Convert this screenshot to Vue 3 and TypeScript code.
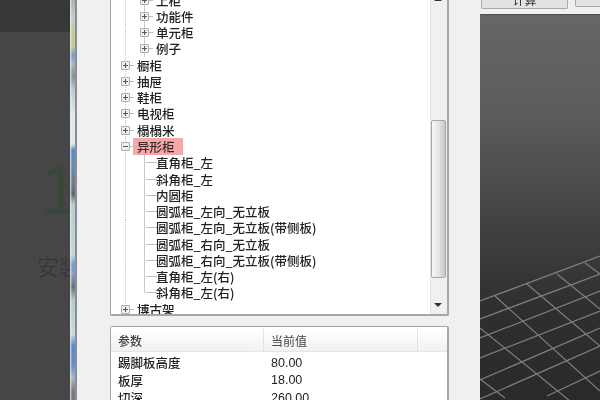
<script setup lang="ts">
interface TreeRow {
  label: string;
  level: number;
  box?: "plus" | "minus";
  last?: boolean;
  active?: boolean;
}

const rows: TreeRow[] = [
  { label: "上柜", level: 1, box: "plus" },
  { label: "功能件", level: 1, box: "plus" },
  { label: "单元柜", level: 1, box: "plus" },
  { label: "例子", level: 1, box: "plus" },
  { label: "橱柜", level: 0, box: "plus" },
  { label: "抽屉", level: 0, box: "plus" },
  { label: "鞋柜", level: 0, box: "plus" },
  { label: "电视柜", level: 0, box: "plus" },
  { label: "榻榻米", level: 0, box: "plus" },
  { label: "异形柜", level: 0, box: "minus", active: true },
  { label: "直角柜_左", level: 1 },
  { label: "斜角柜_左", level: 1 },
  { label: "内圆柜", level: 1 },
  { label: "圆弧柜_左向_无立板", level: 1 },
  { label: "圆弧柜_左向_无立板(带侧板)", level: 1 },
  { label: "圆弧柜_右向_无立板", level: 1 },
  { label: "圆弧柜_右向_无立板(带侧板)", level: 1 },
  { label: "直角柜_左(右)", level: 1 },
  { label: "斜角柜_左(右)", level: 1, last: true },
  { label: "博古架", level: 0, box: "plus" },
];

const params = [
  { name: "踢脚板高度", value: "80.00" },
  { name: "板厚", value: "18.00" },
  { name: "切深", value: "260.00" },
];

// floor grid in preview coordinates (preview starts at 480,14)
const gridLines = [
  [0, 286, 120, 241],
  [0, 304, 120, 259],
  [0, 323, 120, 276],
  [0, 343, 120, 296],
  [0, 365, 120, 313],
  [0, 384, 120, 331],
  [67, 381, 120, 356],
  [15, 281, 120, 376],
  [47, 269, 120, 331],
  [77, 259, 120, 294],
  [105, 248, 120, 259],
  [0, 313, 90, 386],
  [0, 364, 25, 383],
];
</script>

<template>
  <div class="screen">
    <section class="backdrop">
      <div class="backdrop-head"></div>
      <div class="step-no">1</div>
      <div class="step-rule"></div>
      <div class="step-text">安装</div>
    </section>
    <div class="frame-edge"></div>

    <main class="dialog">
      <div class="left-col">
        <div class="tree-box">
          <div class="tree">
            <div
              v-for="row in rows"
              :key="row.label"
              class="row"
              :class="[`level-${row.level}`, { leaf: !row.box, last: row.last }]"
            >
              <span v-if="row.box" class="box">
                <i class="h"></i>
                <i v-if="row.box === 'plus'" class="v"></i>
              </span>
              <span v-else class="stub"></span>
              <span class="label" :class="{ active: row.active }">{{ row.label }}</span>
            </div>
          </div>
          <div class="scrollbar">
            <span class="arrow up"></span>
            <span class="thumb"></span>
            <span class="arrow down"></span>
          </div>
        </div>

        <div class="table-box">
          <div class="t-head">
            <span class="c-name">参数</span>
            <span class="c-value">当前值</span>
            <span class="c-rest"></span>
          </div>
          <div v-for="p in params" :key="p.name" class="t-row">
            <span class="c-name">{{ p.name }}</span>
            <span class="c-value">{{ p.value }}</span>
          </div>
        </div>
      </div>

      <div class="right-col">
        <div class="buttons">
          <button class="btn wide">计算</button>
          <button class="btn"></button>
        </div>
        <div class="preview">
          <svg width="120" height="386" viewBox="0 0 120 386">
            <line
              v-for="(l, i) in gridLines"
              :key="i"
              :x1="l[0]"
              :y1="l[1]"
              :x2="l[2]"
              :y2="l[3]"
              stroke="#7f7f7f"
              stroke-width="1.2"
            />
          </svg>
        </div>
      </div>
    </main>
  </div>
</template>

<style>
html,
body {
  margin: 0;
  background: #f0f0f0;
}
</style>

<style scoped>
.screen {
  width: 600px;
  height: 400px;
  overflow: hidden;
  display: flex;
  background: #f0f0f0;
  font-family: "Noto Sans CJK SC", "Liberation Sans", sans-serif;
  filter: blur(0.55px);
}

.backdrop {
  width: 70px;
  flex: none;
  background: #464646;
  color: #333;
  overflow: hidden;
  display: flex;
  flex-direction: column;
}

.backdrop-head {
  height: 32px;
  flex: none;
  background: #373737;
}

.step-no {
  margin: 118px 0 0 40px;
  height: 80px;
  font: 70px/80px "Liberation Sans", sans-serif;
  color: #39463c;
}

.step-rule {
  height: 1px;
  background: #4b4b4b;
}

.step-text {
  margin: 20px 0 0 37px;
  font-size: 22px;
  font-weight: 300;
  line-height: 28px;
  white-space: nowrap;
  color: #333;
}

.frame-edge {
  width: 7px;
  flex: none;
  background:
    linear-gradient(90deg, rgba(235, 240, 240, 0.8) 0, rgba(235, 240, 240, 0.5) 1px, transparent 2px, transparent 5px, #8a8e92 5.5px),
    linear-gradient(
      180deg,
      #aab4b4 0,
      #c6cdd0 20px,
      #c2cc98 30px,
      #c2cc98 46px,
      #7d9cc4 55px,
      #a9b6c2 64px,
      #8a9096 76px,
      #bfcad4 90px,
      #dfe8ee 115px,
      #dfe8ee 144px,
      #5f86bc 150px,
      #6d8cb4 165px,
      #707880 186px,
      #5f666c 194px,
      #b5cdd0 204px,
      #c4d6d8 255px,
      #7a9ac8 264px,
      #8aa0c0 274px,
      #6a7078 287px,
      #b5cccf 300px,
      #c8dadb 334px,
      #5d86cc 346px,
      #6a8cc4 365px,
      #a8b6c4 378px,
      #77797c 392px,
      #77797c 400px
    );
}

.dialog {
  flex: 1;
  display: flex;
  padding-left: 33px;
  min-width: 0;
}

.left-col {
  width: 339px;
  flex: none;
  display: flex;
  flex-direction: column;
  gap: 10px;
}

.tree-box {
  height: 316px;
  flex: none;
  box-sizing: border-box;
  display: flex;
  background: #fff;
  border: 1px solid #a6a6a6;
  border-top: 0;
  border-right-width: 2px;
  border-bottom-width: 2px;
  border-radius: 0 0 2px 2px;
  overflow: hidden;
}

.tree {
  flex: 1;
  min-width: 0;
  margin-top: -8px;
  color: #222;
  font-size: 12.5px;
  font-weight: 500;
}

.row {
  height: 16.28px;
  display: flex;
  align-items: center;
  position: relative;
  white-space: nowrap;
  /* dotted root guide, x = 125 */
  background: repeating-linear-gradient(180deg, #c4c4c4 0 1px, transparent 1px 2px) 14px 0 / 1px 100% no-repeat;
}

.row.level-0 {
  padding-left: 10px;
}

.row.level-1 {
  padding-left: 29px;
}

.row.level-1::before {
  content: "";
  position: absolute;
  left: 33px;
  top: 0;
  bottom: 0;
  width: 1px;
  background: #c9c9c9;
}

.row.last::before {
  bottom: 50%;
}

.box {
  width: 9px;
  height: 9px;
  flex: none;
  box-sizing: border-box;
  position: relative;
  z-index: 1;
  border: 1px solid #aab0b6;
  border-radius: 1px;
  background: #eef1f4;
  margin-right: 7px;
}

.box::after {
  content: "";
  position: absolute;
  left: 8px;
  top: 3px;
  width: 4px;
  height: 1px;
  background: #bdbdbd;
}

.box .h {
  position: absolute;
  left: 1px;
  top: 3px;
  width: 5px;
  height: 1px;
  background: #555;
}

.box .v {
  position: absolute;
  left: 3px;
  top: 1px;
  width: 1px;
  height: 5px;
  background: #555;
}

.stub {
  width: 12px;
  flex: none;
  height: 1px;
  margin-left: 5px;
  margin-right: -1px;
  background: linear-gradient(90deg, transparent 0 1px, #bdbdbd 1px);
}

.label {
  line-height: 15px;
  position: relative;
}

.label.active {
  background: #f4a8a8;
  padding: 1px 8px 1px 4px;
  margin-left: -4px;
  color: #3b2a2a;
  z-index: 1;
}

.scrollbar {
  width: 16px;
  flex: none;
  position: relative;
  background: #f0f0f0;
  border-left: 1px solid #e4e4e4;
}

.thumb {
  position: absolute;
  left: 0;
  top: 120px;
  width: 15px;
  height: 158px;
  box-sizing: border-box;
  border: 1px solid #a8a8a8;
  border-radius: 2px;
  background: linear-gradient(90deg, #f6f6f6, #e6e6e6 50%, #c6c6cc);
}

.arrow {
  position: absolute;
  left: 3px;
  width: 0;
  height: 0;
  border-left: 4px solid transparent;
  border-right: 4px solid transparent;
}

.arrow.up {
  top: -3px;
  border-bottom: 4px solid #333;
}

.arrow.down {
  top: 303px;
  border-top: 4px solid #333;
}

.table-box {
  flex: 1;
  box-sizing: border-box;
  background: #fff;
  border: 1px solid #a6a6a6;
  border-right-width: 2px;
  border-bottom: 0;
  border-radius: 2px 2px 0 0;
  padding-top: 2px;
  color: #222;
  font-size: 12.5px;
  font-weight: 500;
}

.t-head {
  height: 22px;
  display: flex;
  align-items: center;
  background: linear-gradient(180deg, #fff, #f7f7f7 60%, #f1f1f1);
  border-bottom: 1px solid #e6e6e6;
  color: #444;
}

.t-row {
  height: 17.5px;
  display: flex;
  align-items: center;
}

.t-head + .t-row {
  margin-top: 2px;
}

.c-name {
  width: 153px;
  flex: none;
  box-sizing: border-box;
  padding-left: 7px;
}

.c-value {
  width: 154px;
  flex: none;
  box-sizing: border-box;
  padding-left: 7px;
  font-family: "Liberation Sans", "Noto Sans CJK SC", sans-serif;
  font-size: 12.5px;
  font-weight: 400;
}

.t-head .c-name,
.t-head .c-value {
  height: 100%;
  display: flex;
  align-items: center;
  border-right: 1px solid #e2e2e2;
}

.t-head .c-name {
  font-size: 12px;
}

.t-head .c-value {
  font-family: "Noto Sans CJK SC", sans-serif;
  font-size: 12px;
}

.right-col {
  flex: 1;
  min-width: 0;
  margin-left: 31px;
  display: flex;
  flex-direction: column;
}

.buttons {
  height: 14px;
  flex: none;
  display: flex;
  gap: 7px;
  padding-left: 1px;
}

.btn {
  flex: none;
  width: 40px;
  height: 7px;
  padding: 0;
  box-sizing: border-box;
  background: #e2e2e2;
  border: 1px solid #a9a9a9;
  border-top: 0;
  border-radius: 0 0 2px 2px;
  font: 12px/1 "Noto Sans CJK SC", sans-serif;
  color: #333;
  overflow: hidden;
}

.btn.wide {
  width: 87px;
  line-height: 0;
  padding-bottom: 8px;
}

.preview {
  flex: 1;
  background: linear-gradient(180deg, #666 0, #5c5c5c 100px, #444 200px, #2f2f2f 290px, #2a2a2a 100%);
  border-top: 1px solid #4f4f4f;
}

.preview svg {
  display: block;
}
</style>
